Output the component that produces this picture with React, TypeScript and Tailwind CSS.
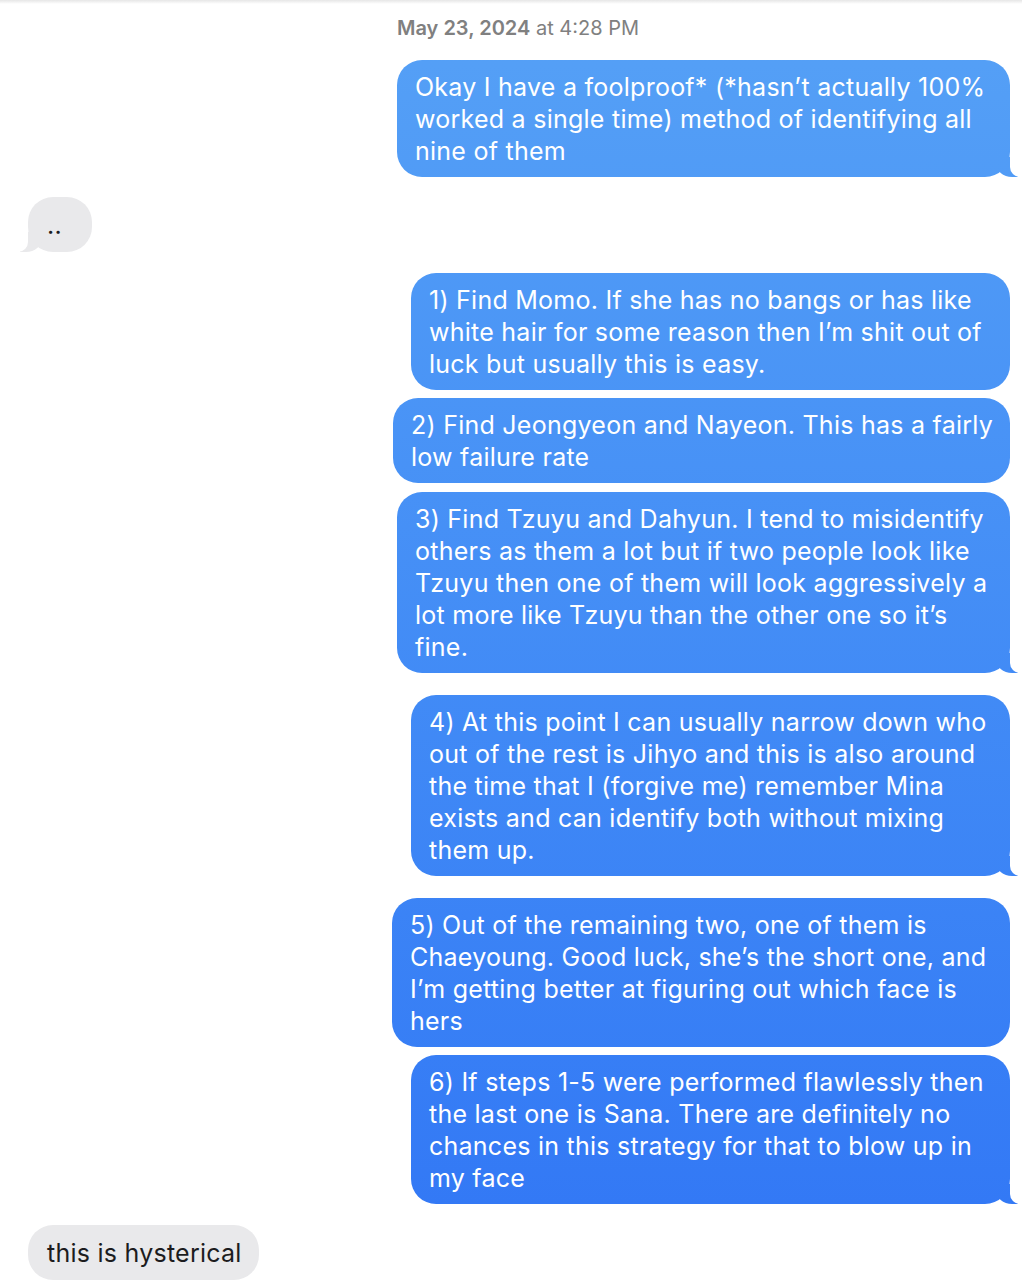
import React from 'react';

const font = { fontFamily: 'Inter, "Noto Sans", sans-serif' };

type Msg = {
  lines: string[];
  width: string;
  tail?: boolean;
  gap: string;
};

const sent: Msg[] = [
  {
    lines: ['1) Find Momo. If she has no bangs or has like', 'white hair for some reason then I’m shit out of', 'luck but usually this is easy.'],
    width: 'w-[599px]',
    gap: 'mt-[21px]',
  },
  {
    lines: ['2) Find Jeongyeon and Nayeon. This has a fairly', 'low failure rate'],
    width: 'w-[617px]',
    gap: 'mt-[8px]',
  },
  {
    lines: [
      '3) Find Tzuyu and Dahyun. I tend to misidentify',
      'others as them a lot but if two people look like',
      'Tzuyu then one of them will look aggressively a',
      'lot more like Tzuyu than the other one so it’s',
      'fine.',
    ],
    width: 'w-[613px]',
    tail: true,
    gap: 'mt-[9px]',
  },
  {
    lines: [
      '4) At this point I can usually narrow down who',
      'out of the rest is Jihyo and this is also around',
      'the time that I (forgive me) remember Mina',
      'exists and can identify both without mixing',
      'them up.',
    ],
    width: 'w-[599px]',
    tail: true,
    gap: 'mt-[22px]',
  },
  {
    lines: [
      '5) Out of the remaining two, one of them is',
      'Chaeyoung. Good luck, she’s the short one, and',
      'I’m getting better at figuring out which face is',
      'hers',
    ],
    width: 'w-[618px]',
    gap: 'mt-[22px]',
  },
  {
    lines: [
      '6) If steps 1-5 were performed flawlessly then',
      'the last one is Sana. There are definitely no',
      'chances in this strategy for that to blow up in',
      'my face',
    ],
    width: 'w-[599px]',
    tail: true,
    gap: 'mt-[8px]',
  },
];

const SentBubble = ({ msg }: { msg: Msg }) => (
  <div className={`relative self-end ${msg.width} ${msg.gap} rounded-[25px] bg-linear-to-b from-[#56a1f6] to-[#3176f5] bg-fixed pb-[10px] pl-[18px] pr-[12px] pt-[11px] text-white`}>
    {msg.lines.map((l, i) => (
      <div key={i} className="h-[32px] whitespace-nowrap leading-[32px]">
        {l}
      </div>
    ))}
    {msg.tail && (
      <>
        <div className="absolute bottom-0 right-[-8px] h-[20px] w-[22px] rounded-bl-[16px_14px] bg-linear-to-b from-[#56a1f6] to-[#3176f5] bg-fixed" />
        <div className="absolute bottom-0 right-[-26px] h-[22px] w-[26px] rounded-bl-[10px] bg-white" />
      </>
    )}
  </div>
);

const ReceivedBubble = ({ text, tail, className }: { text: string; tail?: boolean; className: string }) => (
  <div className={`relative self-start rounded-[25px] bg-[#e9e9eb] pb-[11px] pl-[19px] pr-[12px] pt-[12px] text-[#1c1c1e] ${className}`}>
    <div className="h-[32px] whitespace-nowrap leading-[32px]">{text}</div>
    {tail && (
      <>
        <div className="absolute bottom-0 left-[-8px] h-[20px] w-[22px] rounded-br-[16px_14px] bg-[#e9e9eb]" />
        <div className="absolute bottom-0 left-[-26px] h-[22px] w-[26px] rounded-br-[10px] bg-white" />
      </>
    )}
  </div>
);

export default function App() {
  return (
    <div className="min-h-screen w-[1022px] bg-white text-[25px] tracking-[0.25px]" style={font}>
      <div className="h-[4px] bg-linear-to-b from-[#e6e6e6] to-white" />
      <div className="flex flex-col pl-[28px] pr-[12px]">
        <div className="mt-[11px] pl-[369px] text-[20px] leading-[26px] tracking-normal text-[#808080]">
          <span className="font-semibold">May 23, 2024</span> at 4:28 PM
        </div>

        <SentBubble
          msg={{
            lines: ['Okay I have a foolproof* (*hasn’t actually 100%', 'worked a single time) method of identifying all', 'nine of them'],
            width: 'w-[613px]',
            tail: true,
            gap: 'mt-[19px]',
          }}
        />

        <ReceivedBubble text=".." tail className="mt-[20px] w-[64px]" />

        {sent.map((m, i) => (
          <SentBubble key={i} msg={m} />
        ))}

        <ReceivedBubble text="this is hysterical" className="mt-[21px] w-[231px]" />
      </div>
    </div>
  );
}
